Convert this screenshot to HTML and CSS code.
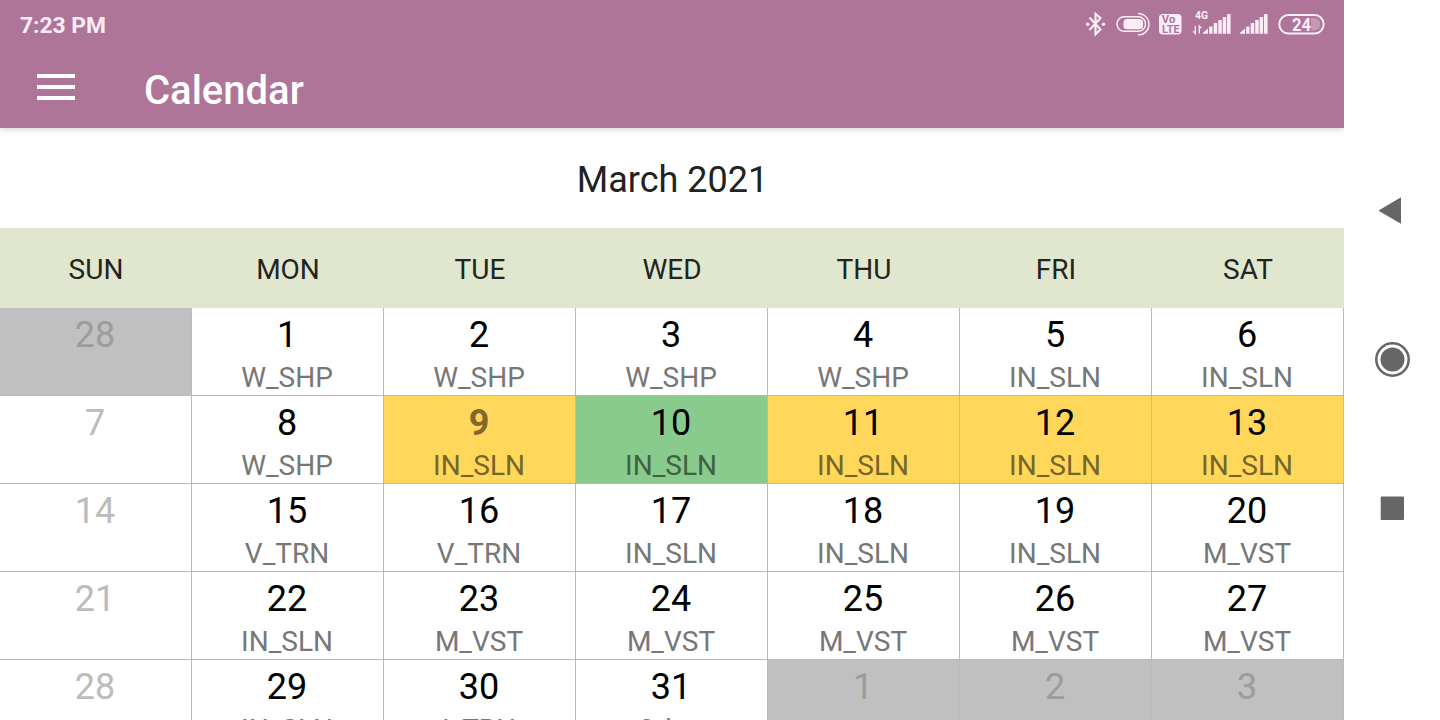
FILE: index.html
```html
<!DOCTYPE html>
<html lang="en">
<head>
<meta charset="utf-8">
<title>Calendar</title>
<link rel="stylesheet" href="styles.css">
</head>
<body>
<div class="screen">
  <main class="app">
    <header class="appbar">
      <div class="status">
        <span class="clock">7:23 PM</span>
        <svg class="status-icons" width="244" height="32" viewBox="1084 8 244 32" fill="none" stroke="#fbeef6">
          <path d="M1089.500 17.500l11 12-5 4.700v-20.500l5 4.300-11 12" stroke-width="2.100"/>
          <circle cx="1087.700" cy="24.300" r="1.700" fill="#fbeef6" stroke="none"/>
          <circle cx="1103.500" cy="24.300" r="1.700" fill="#fbeef6" stroke="none"/>
          <rect x="1117" y="16.700" width="28.500" height="14.600" rx="7.300" stroke-width="1.500"/>
          <rect x="1123.500" y="19" width="19.500" height="10.200" rx="3.500" fill="#fbeef6" stroke="none"/>
          <path d="M1138 13.500a10.800 10.800 0 0 1 5 20.500" stroke-width="1.500"/>
          <path d="M1143 34q-2.500 1-5 .500" stroke-width="1.500"/>
          <rect x="1159" y="14" width="22.500" height="20.500" rx="4" fill="#fbeef6" stroke="none"/>
          <g stroke="none" class="glyphs">
            <text x="1161.800" y="23" font-size="10" fill="#ae7598" textLength="13.500" lengthAdjust="spacingAndGlyphs">Vo</text>
            <text x="1162" y="32.600" font-size="10" fill="#ae7598" textLength="17.500" lengthAdjust="spacingAndGlyphs">LTE</text>
            <text x="1195" y="19" font-size="10" fill="#fbeef6" textLength="13" lengthAdjust="spacingAndGlyphs">4G</text>
            <text x="1292" y="30.500" font-size="19" fill="#fbeef6" textLength="19" lengthAdjust="spacingAndGlyphs">24</text>
          </g>
          <path d="M1195.300 26v7.500l-2-2.300M1199.300 33.500v-7.500l2 2.300" stroke-width="1.300"/>
          <path fill="#fbeef6" stroke="none" d="M1203 33.800v-1l5-4.300v5.300zM1209.200 26.500h3.300v7.300h-3.300zM1213.700 23h3.500v10.800h-3.500zM1218.300 20h3.500v13.800h-3.500zM1222.700 17h3.500v16.800h-3.500zM1227 14h3.600v19.800h-3.600z"/>
          <path fill="#fbeef6" stroke="none" d="M1240 33.800v-1l5-4.300v5.300zM1246.200 26.500h3.300v7.300h-3.300zM1250.700 23h3.500v10.800h-3.500zM1255.200 20h3.500v13.800h-3.500zM1259.600 17h3.500v16.800h-3.500zM1264 14h3.600v19.800h-3.600z"/>
          <rect x="1279.200" y="15" width="44.500" height="18.600" rx="9.300" stroke-width="2"/>
          <path d="M1311 18h3a6.200 6.200 0 0 1 0 12.500h-3z" fill="#fbeef6" fill-opacity=".3" stroke="none"/>
        </svg>
      </div>
      <div class="toolbar">
        <svg class="menu" width="38" height="26" viewBox="0 0 38 26" fill="#fff"><path d="M0 0h38v4H0zM0 11h38v4H0zM0 22h38v4H0z"/></svg>
        <h1 class="title">Calendar</h1>
      </div>
    </header>
    <h2 class="month">March 2021</h2>
    <div class="weekdays"><span>SUN</span><span>MON</span><span>TUE</span><span>WED</span><span>THU</span><span>FRI</span><span>SAT</span></div>
    <div class="days">
      <div class="day outside muted"><b>28</b></div>
      <div class="day"><b>1</b><i>W_SHP</i></div>
      <div class="day"><b>2</b><i>W_SHP</i></div>
      <div class="day"><b>3</b><i>W_SHP</i></div>
      <div class="day"><b>4</b><i>W_SHP</i></div>
      <div class="day"><b>5</b><i>IN_SLN</i></div>
      <div class="day"><b>6</b><i>IN_SLN</i></div>

      <div class="day muted"><b>7</b></div>
      <div class="day"><b>8</b><i>W_SHP</i></div>
      <div class="day amber today"><b>9</b><i>IN_SLN</i></div>
      <div class="day green"><b>10</b><i>IN_SLN</i></div>
      <div class="day amber"><b>11</b><i>IN_SLN</i></div>
      <div class="day amber"><b>12</b><i>IN_SLN</i></div>
      <div class="day amber"><b>13</b><i>IN_SLN</i></div>

      <div class="day muted"><b>14</b></div>
      <div class="day"><b>15</b><i>V_TRN</i></div>
      <div class="day"><b>16</b><i>V_TRN</i></div>
      <div class="day"><b>17</b><i>IN_SLN</i></div>
      <div class="day"><b>18</b><i>IN_SLN</i></div>
      <div class="day"><b>19</b><i>IN_SLN</i></div>
      <div class="day"><b>20</b><i>M_VST</i></div>

      <div class="day muted"><b>21</b></div>
      <div class="day"><b>22</b><i>IN_SLN</i></div>
      <div class="day"><b>23</b><i>M_VST</i></div>
      <div class="day"><b>24</b><i>M_VST</i></div>
      <div class="day"><b>25</b><i>M_VST</i></div>
      <div class="day"><b>26</b><i>M_VST</i></div>
      <div class="day"><b>27</b><i>M_VST</i></div>

      <div class="day muted"><b>28</b></div>
      <div class="day"><b>29</b><i>IN_SLN</i></div>
      <div class="day"><b>30</b><i>I_TRN</i></div>
      <div class="day"><b>31</b><i>Other</i></div>
      <div class="day outside muted"><b>1</b></div>
      <div class="day outside muted"><b>2</b></div>
      <div class="day outside muted"><b>3</b></div>
    </div>
  </main>
  <nav class="navbar">
    <svg width="36" height="36" viewBox="0 0 36 36" fill="#666"><path d="M5 18.200L26.500 5.600q.500-.200.500.500v25q0 .700-.500.500L5 19q-.700-.400 0-.800z"/></svg>
    <svg width="36" height="36" viewBox="0 0 36 36" fill="#666"><circle cx="18.500" cy="18.500" r="12"/><circle cx="18.500" cy="18.500" r="16.200" fill="none" stroke="#666" stroke-width="2.500"/></svg>
    <svg width="36" height="36" viewBox="0 0 36 36" fill="#666"><rect x="6.700" y="6.500" width="23.300" height="23.500" rx="1"/></svg>
  </nav>
</div>
</body>
</html>
```
FILE: styles.css
```css
* { box-sizing: border-box; }
body { margin: 0; background: #fff; font-family: Roboto, sans-serif; }
.screen { display: flex; width: 1440px; height: 720px; overflow: hidden; }
.app { width: 1344px; height: 720px; overflow: hidden; }
.appbar { height: 128px; background: #ae7598; box-shadow: 0 2px 6px rgba(0, 0, 0, .15); color: #fff; }
.status { display: flex; justify-content: space-between; height: 48px; padding: 8px 16px 0 20px; }
.clock { font-size: 22.800px; font-weight: 700; line-height: 36px; color: #fbeef6; }
.glyphs { font-weight: 700; }
.toolbar { display: flex; align-items: center; height: 80px; padding: 0 37px; gap: 69px; }
.menu { margin-bottom: 2px; }
.title { margin: 5px 0 0; font-size: 40px; font-weight: 500; line-height: 48px; }
.month { margin: 0; height: 100px; padding: 2px 0 0 1px; font-size: 36px; font-weight: 400; line-height: 100px; text-align: center; color: #222; }
.weekdays { display: grid; grid-template-columns: repeat(7, 192px); height: 80px; background: #e1e6cf; font-size: 28px; line-height: 83px; text-align: center; color: #22241f; }
.days { display: grid; grid-template-columns: repeat(7, 192px); grid-auto-rows: 88px; }
.day { display: flex; flex-direction: column; align-items: center; padding-right: 1px; border-right: 1px solid #b9b9b9; border-bottom: 1px solid #b9b9b9; color: #000; }
.day b { margin-top: 6px; font-size: 36px; font-weight: 400; line-height: 42px; }
.day i { margin-top: 5px; font-size: 28px; font-style: normal; line-height: 33px; color: #777; }
.muted { color: #bcbcbc; }
.outside { background: #c0c0c0; border-color: #bbb; color: #9c9c9c; }
.amber { background: #ffd75b; }
.amber i { color: #776628; }
.today b { font-weight: 700; color: #80692b; }
.green { background: #89ca8d; }
.green i { color: #40613f; }
.navbar { display: flex; flex-direction: column; align-items: center; width: 96px; padding-top: 192px; gap: 113px; }
```
